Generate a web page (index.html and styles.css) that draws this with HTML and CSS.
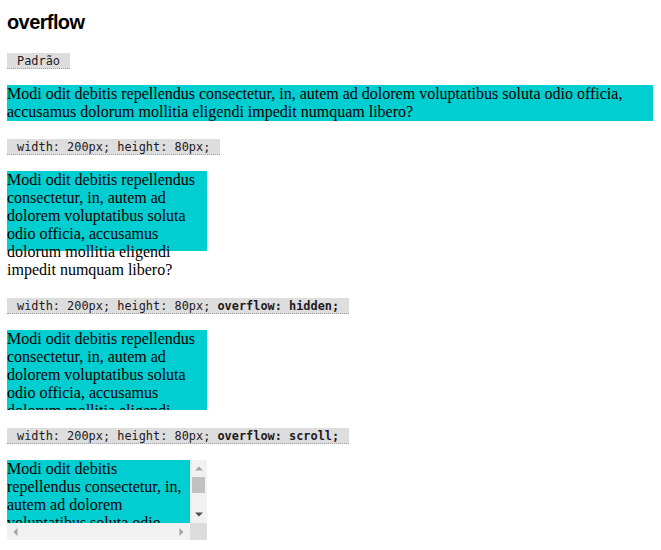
FILE: index.html
```html
<!DOCTYPE html>
<html lang="pt">
<head>
<meta charset="utf-8">
<title>overflow</title>
<link rel="stylesheet" href="styles.css">
</head>
<body>
<h1 class="title">overflow</h1>

<code class="tag">Padrão</code>
<div class="box box-full">Modi odit debitis repellendus consectetur, in, autem ad dolorem voluptatibus soluta odio officia, accusamus dolorum mollitia eligendi impedit numquam libero?</div>

<code class="tag">width: 200px; height: 80px;</code>
<div class="box box-fixed box-gap">Modi odit debitis repellendus consectetur, in, autem ad dolorem voluptatibus soluta odio officia, accusamus dolorum mollitia eligendi impedit numquam libero?</div>

<code class="tag">width: 200px; height: 80px; <b>overflow: hidden;</b></code>
<div class="box box-fixed box-hidden">Modi odit debitis repellendus consectetur, in, autem ad dolorem voluptatibus soluta odio officia, accusamus dolorum mollitia eligendi impedit numquam libero?</div>

<code class="tag">width: 200px; height: 80px; <b>overflow: scroll;</b></code>
<div class="scrollbox">
  <div class="scroll-content">Modi odit debitis repellendus consectetur, in, autem ad dolorem voluptatibus soluta odio officia, accusamus dolorum mollitia eligendi impedit numquam libero?</div>
  <div class="vbar">
    <span class="sb-btn"><svg width="8" height="5" viewBox="0 0 8 5"><polygon points="0,4.5 4,0.5 8,4.5" fill="#a3a3a3"/></svg></span>
    <span class="vthumb"></span>
    <span class="vtrack"></span>
    <span class="sb-btn"><svg width="8" height="5" viewBox="0 0 8 5"><polygon points="0,0.5 8,0.5 4,4.5" fill="#505050"/></svg></span>
  </div>
  <div class="hbar">
    <span class="sb-btn"><svg width="5" height="8" viewBox="0 0 5 8"><polygon points="4.5,0 4.5,8 0.5,4" fill="#a3a3a3"/></svg></span>
    <span class="htrack"></span>
    <span class="sb-btn"><svg width="5" height="8" viewBox="0 0 5 8"><polygon points="0.5,0 4.5,4 0.5,8" fill="#a3a3a3"/></svg></span>
  </div>
  <div class="corner"></div>
</div>
</body>
</html>
```

FILE: styles.css
```css
html, body {
  background: #fff;
}

body {
  margin: 11px 8px 0 7px;
  font-family: "Liberation Serif", "Times New Roman", serif;
  font-size: 16px;
  line-height: 18px;
  color: #000;
}

.title {
  margin: 0 0 19px;
  font-family: "Liberation Sans", Arial, sans-serif;
  font-size: 20px;
  line-height: 23px;
  font-weight: bold;
  letter-spacing: -0.6px;
}

.tag {
  display: block;
  width: fit-content;
  box-sizing: border-box;
  height: 16px;
  margin: 0 0 16px;
  padding: 0 10px;
  background: #dddddd;
  border-bottom: 1px dotted #a0a0a0;
  font-family: "DejaVu Sans Mono", Consolas, monospace;
  font-size: 11.9px;
  line-height: 16px;
  color: #1e1a1e;
}

.tag b {
  font-weight: bold;
}

.box {
  background: #00ced1;
  margin: 0 0 18px;
}

.box-fixed {
  width: 200px;
  height: 80px;
}

.box-gap {
  margin-bottom: 47px;
}

.box-hidden {
  overflow: hidden;
}

/* overflow: scroll box with classic scrollbars */
.scrollbox {
  display: grid;
  grid-template-columns: 183px 17px;
  grid-template-rows: 63px 17px;
  width: 200px;
  height: 80px;
  background: #00ced1;
}

.scroll-content {
  overflow: hidden;
  background: #00ced1;
}

.vbar {
  display: flex;
  flex-direction: column;
  background: #f1f1f1;
}

.hbar {
  display: flex;
  background: #f1f1f1;
}

.sb-btn {
  flex: 0 0 17px;
  width: 17px;
  height: 17px;
  display: flex;
  align-items: center;
  justify-content: center;
}

.vthumb {
  flex: 0 0 16px;
  margin: 0 2px;
  background: #c1c1c1;
}

.vtrack,
.htrack {
  flex: 1 1 auto;
}

.corner {
  background: #dcdcdc;
}
```
